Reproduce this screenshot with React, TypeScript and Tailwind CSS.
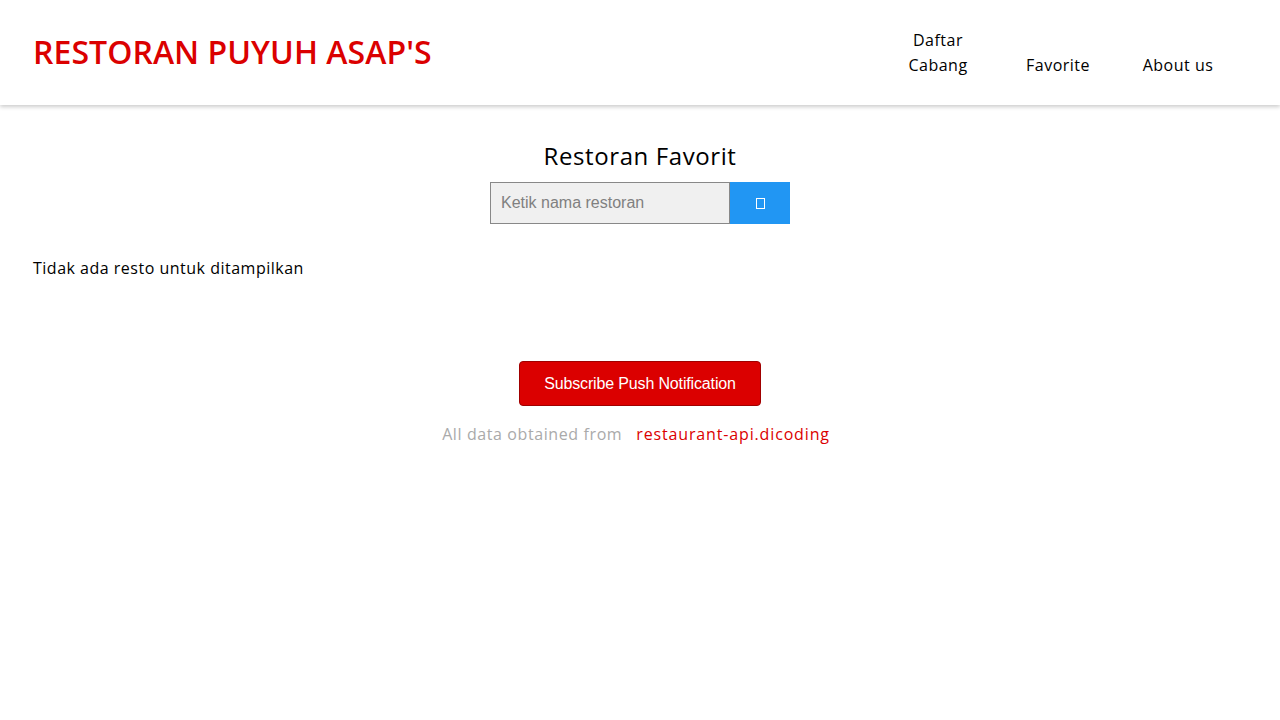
import React from "react";

const poppins = { fontFamily: '"Open Sans", "Noto Sans", sans-serif' };

export default function App() {
  return (
    <div className="min-h-screen bg-white text-black tracking-[0.5px]" style={poppins}>
      <header className="flex h-[105px] items-center justify-between bg-white pl-[33px] pr-[42px] shadow-[0_2px_4px_rgba(0,0,0,0.2)]">
        <h1 className="-mt-[2px] text-[32px] font-semibold leading-none tracking-[0.05px] text-[#db0000]">
          RESTORAN PUYUH ASAP'S
        </h1>
        <nav className="flex items-end">
          <a className="w-[120px] px-[14px] text-center text-[16px] leading-[25px]">Daftar Cabang</a>
          <a className="w-[120px] text-center text-[16px] leading-[25px]">Favorite</a>
          <a className="w-[120px] text-center text-[16px] leading-[25px]">About us</a>
        </nav>
      </header>

      <main className="px-[33px]">
        <h2 className="mt-[36px] text-center text-[24px] leading-[30px] tracking-[0.6px]">Restoran Favorit</h2>
        <div className="mt-[11px] flex justify-center">
          <input
            placeholder="Ketik nama restoran"
            className="h-[42px] w-[240px] border border-[#888] bg-[#f0f0f0] px-[10px] text-[16px] tracking-normal text-black outline-none placeholder:text-[#808080]"
            style={{ fontFamily: '"Liberation Sans", Arial, sans-serif' }}
          />
          <button className="flex h-[42px] w-[60px] items-center justify-center bg-[#2196f3]">
            <span className="block h-[11px] w-[9px] border border-white" />
          </button>
        </div>
        <p className="mt-[32px] text-[16px] leading-[24px]">Tidak ada resto untuk ditampilkan</p>
      </main>

      <footer className="mt-[81px] flex flex-col items-center">
        <button
          className="h-[45px] w-[242px] rounded-[4px] border border-[#a00000] bg-[#db0000] text-[16px] tracking-[-0.15px] text-white"
          style={{ fontFamily: '"Liberation Sans", Arial, sans-serif' }}
        >
          Subscribe Push Notification
        </button>
        <p className="mt-[16px] pr-[8px] text-[16px] leading-[24px]">
          <span className="tracking-[0.6px] text-[#aaaaaa]">All data obtained from</span>
          <a className="ml-[14px] tracking-[0.85px] text-[#db0000]">restaurant-api.dicoding</a>
        </p>
      </footer>
    </div>
  );
}
